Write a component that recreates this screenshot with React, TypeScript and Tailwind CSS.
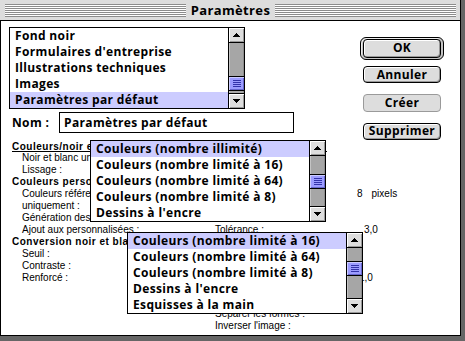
import React from "react";

const BIG = "font-['Open_Sans',sans-serif] font-bold text-[12px] tracking-[0.35px] text-black";
const SMALL = "font-['Liberation_Sans',Arial,sans-serif] text-[10px] text-black";

const profiles = [
  "Fond noir",
  "Formulaires d'entreprise",
  "Illustrations techniques",
  "Images",
  "Paramètres par défaut",
];

const modes1 = [
  "Couleurs (nombre illimité)",
  "Couleurs (nombre limité à 16)",
  "Couleurs (nombre limité à 64)",
  "Couleurs (nombre limité à 8)",
  "Dessins à l'encre",
];

const modes2 = [
  "Couleurs (nombre limité à 16)",
  "Couleurs (nombre limité à 64)",
  "Couleurs (nombre limité à 8)",
  "Dessins à l'encre",
  "Esquisses à la main",
];

type Row = {
  left?: string;
  head?: boolean;
  rule?: boolean;
  label?: string;
  value?: string;
  unit?: string;
  shift?: string;
};

const rows: Row[] = [
  { left: "Couleurs/noir et blanc", head: true, rule: true },
  { left: "Noir et blanc uniquement :" },
  { left: "Lissage :" },
  { left: "Couleurs personnalisées", head: true },
  { left: "Couleurs référencées", value: "8", unit: "pixels", shift: "ml-0" },
  { left: "uniquement :" },
  { left: "Génération des couleurs :" },
  { left: "Ajout aux personnalisées :", label: "Tolérance :", value: "3,0", shift: "ml-[7px]" },
  { left: "Conversion noir et blanc", head: true },
  { left: "Seuil :" },
  { left: "Contraste :" },
  { left: "Renforcé :", value: "1,0", shift: "ml-[2px]" },
  {},
  {},
  { label: "Séparer les formes :" },
  { label: "Inverser l'image :" },
];

const Arrow = ({ down }: { down?: boolean }) => (
  <div
    className={`flex h-[15px] items-center justify-center bg-[#dddddd] shadow-[inset_1px_1px_0_#ffffff,inset_-1px_-1px_0_#999999] ${
      down ? "border-t border-black" : "border-b border-black"
    }`}
  >
    <svg width="7" height="4" viewBox="0 0 7 4" shapeRendering="crispEdges" className={down ? "rotate-180" : ""}>
      <path d="M3 0h1v1H3zM2 1h3v1H2zM1 2h5v1H1zM0 3h7v1H0z" fill="#000" />
    </svg>
  </div>
);

const ScrollBar = ({ thumb }: { thumb: string }) => (
  <div className="flex w-[16px] flex-col border-l border-black">
    <Arrow />
    <div className="flex-1 bg-[#a6a6a6] shadow-[inset_1px_0_0_#c4c4c4,inset_-1px_0_0_#8c8c8c]">
      {/* thumb with grip lines */}
      <div
        className={`${thumb} flex h-[15px] flex-col items-center justify-center gap-px border-y border-black bg-[#9c9cff] shadow-[inset_1px_1px_0_#ccccff,inset_-1px_-1px_0_#6666cc]`}
      >
        {[0, 1, 2, 3].map((i) => (
          <div key={i} className="h-px w-[8px] bg-[#3333aa]" />
        ))}
      </div>
    </div>
    <Arrow down />
  </div>
);

const ListBox = ({
  items,
  selected,
  thumb,
  className = "",
}: {
  items: string[];
  selected: number;
  thumb: string;
  className?: string;
}) => (
  <div className={`${className} flex h-[82px] w-[236px] border border-black bg-white`}>
    <div className="flex flex-1 flex-col overflow-hidden">
      {items.map((t, i) => (
        <div
          key={t}
          className={`${BIG} h-[16px] whitespace-nowrap pl-[5px] leading-[16px] ${
            i === selected ? "bg-[#ccccff]" : ""
          }`}
        >
          {t}
        </div>
      ))}
    </div>
    <ScrollBar thumb={thumb} />
  </div>
);

const Button = ({ label, disabled }: { label: string; disabled?: boolean }) => (
  <div
    className={`${BIG} flex h-[19px] w-[78px] items-center justify-center rounded-[4px] border bg-[#dddddd] leading-none ${
      disabled
        ? "border-[#9a9a9a] text-[#9a9a9a]"
        : "border-black shadow-[inset_1px_1px_0_#ffffff,inset_-1px_-1px_0_#999999]"
    }`}
  >
    {label}
  </div>
);

const Stripes = () => (
  <div className="h-[13px] flex-1 bg-[repeating-linear-gradient(to_bottom,#8c8c8c_0px,#8c8c8c_1px,#ffffff_1px,#ffffff_2px)]" />
);

export default function App() {
  return (
    <div className="flex h-[341px] w-[465px] flex-col bg-[#666666] pb-[5px] pr-[4px]">
      <div className="flex flex-1 flex-col border-b border-r border-black">
        {/* TITLE BAR */}
        <div className="flex h-[21px] items-center border-b border-black bg-[#dddddd] pl-[5px] pr-[4px]">
          <Stripes />
          <span className={`${BIG} px-[5px] text-[13px] leading-none`}>Paramètres</span>
          <Stripes />
        </div>

        {/* CONTENT */}
        <div className="relative flex-1 border-l border-black bg-white">
          <div className="flex h-[119px] pl-[8px] pt-[6px]">
            <div className="flex w-[285px] flex-col">
              <ListBox items={profiles} selected={4} thumb="mt-[33px]" />
              <div className="mt-[3px] flex items-center">
                <span className={`${BIG} w-[50px] pl-[3px]`}>Nom :</span>
                <div className={`${BIG} flex h-[21px] w-[235px] items-center border border-black pl-[4px]`}>
                  Paramètres par défaut
                </div>
              </div>
            </div>
            <div className="ml-[66px] mt-[10px] flex w-[84px] flex-col items-center gap-[11px]">
              <div className="mb-[-5px] flex h-[25px] w-[84px] items-center justify-center rounded-[6px] border border-black bg-[#c4c4c4] shadow-[inset_1px_1px_0_#eeeeee]">
                <Button label="OK" />
              </div>
              <Button label="Annuler" />
              <Button label="Créer" disabled />
              <Button label="Supprimer" />
            </div>
          </div>

          {/* SETTINGS */}
          <div className={`${SMALL} flex flex-col pl-[11px]`}>
            {rows.map((r, i) => (
              <div key={i} className="flex h-[12px] items-center whitespace-nowrap leading-[12px]">
                <div className={`w-[203px] ${r.head ? "text-[10px] font-bold tracking-[0.5px]" : "pl-[10px]"}`}>
                  {r.rule ? (
                    <div className="h-[11px] w-[315px] border-b border-black leading-[11px]">{r.left}</div>
                  ) : (
                    r.left
                  )}
                </div>
                <div className="w-[142px]">{r.label}</div>
                {r.value && (
                  <div className={`${r.shift} flex`}>
                    <span>{r.value}</span>
                    {r.unit && <span className="ml-[9px]">{r.unit}</span>}
                  </div>
                )}
              </div>
            ))}
          </div>

          {/* OPEN POPUP LISTS */}
          <ListBox items={modes1} selected={0} thumb="mt-[18px]" className="absolute left-[89px] top-[119px]" />
          <ListBox items={modes2} selected={0} thumb="mt-[13px]" className="absolute left-[126px] top-[211px]" />
        </div>
      </div>
    </div>
  );
}
